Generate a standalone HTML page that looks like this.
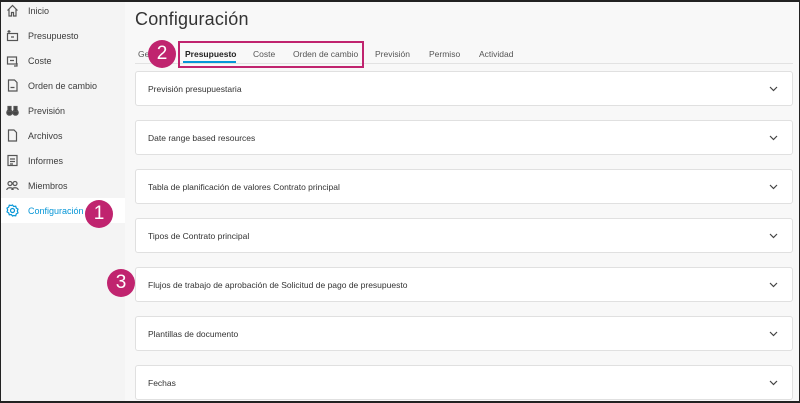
<!DOCTYPE html>
<html><head><meta charset="utf-8"><style>
*{box-sizing:border-box;margin:0;padding:0}
body{width:800px;height:403px;overflow:hidden;font-family:"Liberation Sans",sans-serif;background:#fff;position:relative}
.frame{position:absolute;left:0;top:0;width:800px;height:403px;border:1px solid #222;border-top-width:2px;border-bottom-width:2px;background:#f8f8f8;overflow:hidden}
.side{position:absolute;left:0;top:0;width:124px;height:403px;background:#f4f4f4}
.it{position:absolute;left:0;width:124px;height:25px;font-size:9px;color:#3c3c3c;display:flex;align-items:center}
.it svg{position:absolute;left:5px;width:13px;height:13px;fill:none;stroke:#555;stroke-width:1.2}
.it span{position:absolute;left:27px}
.it.act{background:#fff;color:#0696d7}
.it.act svg{stroke:#0696d7}
h1{position:absolute;left:134px;top:7px;font-size:18px;font-weight:normal;color:#333;letter-spacing:.2px}
.tabs{position:absolute;left:134px;top:40px;width:658px;height:22px;border-bottom:1px solid #e2e2e2;font-size:8.5px;color:#555}
.tabs span{position:absolute;top:7px}
.card{position:absolute;left:134px;width:658px;height:35px;background:#fff;border:1px solid #e0e0e0;border-radius:3px;font-size:8.5px;color:#333}
.card span{position:absolute;left:12px;top:12px}
.card svg{position:absolute;right:14px;top:13px;width:9px;height:7px}
.circ{position:absolute;width:28px;height:28px;border-radius:50%;background:#c0246f;color:#fff;font-size:19px;text-align:center;line-height:28px}
</style></head><body><div class="frame">
<div class="side">
<div class="it" style="top:-4px"><svg viewBox="0 0 13 13"><path d="M1.5 6.5L6.5 1.5 11.5 6.5M3 5v7h2.5V8.5h2V12H10V5"/></svg><span>Inicio</span></div>
<div class="it" style="top:21px"><svg viewBox="0 0 13 13"><rect x="1.5" y="4.5" width="10" height="7"/><path d="M3 1v3M1.5 2.5h3M5 8h3"/></svg><span>Presupuesto</span></div>
<div class="it" style="top:46px"><svg viewBox="0 0 13 13"><rect x="1.5" y="3" width="9" height="7"/><path d="M4 6.5h4M11 9v3h-3"/></svg><span>Coste</span></div>
<div class="it" style="top:71px"><svg viewBox="0 0 13 13"><path d="M2.5 1h6l2.5 2.5V12h-8.5z M4.5 8.5h4"/></svg><span>Orden de cambio</span></div>
<div class="it" style="top:96px"><svg viewBox="0 0 13 13" style="fill:#444"><circle cx="3.5" cy="8.5" r="2.7"/><circle cx="9.5" cy="8.5" r="2.7"/><rect x="2" y="2.5" width="3" height="5"/><rect x="8" y="2.5" width="3" height="5"/></svg><span>Previsión</span></div>
<div class="it" style="top:121px"><svg viewBox="0 0 13 13"><path d="M2.5 1h5.5l2.5 2.5V12h-8z"/></svg><span>Archivos</span></div>
<div class="it" style="top:146px"><svg viewBox="0 0 13 13"><rect x="2" y="1.5" width="9" height="10"/><path d="M4 5h5M4 7.5h5M4 10h3"/></svg><span>Informes</span></div>
<div class="it" style="top:171px"><svg viewBox="0 0 13 13"><circle cx="4" cy="4.5" r="2"/><circle cx="9" cy="4.5" r="2"/><path d="M0.8 11c0-3 6.4-3 6.4 0M5.8 11c0-3 6.4-3 6.4 0"/></svg><span>Miembros</span></div>
<div class="it act" style="top:196px"><svg viewBox="0 0 13 13"><circle cx="6.5" cy="6.5" r="2"/><path d="M6.5 1l1.2 1.5 2-.3.6 1.9 1.7 1-.7 1.9.7 1.9-1.7 1-.6 1.9-2-.3L6.5 12 5.3 10.5l-2 .3-.6-1.9L1 7.9l.7-1.9L1 4.1l1.7-1 .6-1.9 2 .3z"/></svg><span>Configuración</span></div>
</div>
<h1>Configuración</h1>
<div class="tabs">
<span style="left:3px">Ge</span>
<span style="left:50px;font-weight:bold;color:#222">Presupuesto</span>
<span style="left:118px">Coste</span>
<span style="left:158px">Orden de cambio</span>
<span style="left:240px">Previsión</span>
<span style="left:294px">Permiso</span>
<span style="left:344px">Actividad</span>
<div style="position:absolute;left:48px;top:19px;width:53px;height:2px;background:#0696d7"></div>
</div>
<div style="position:absolute;left:177px;top:39px;width:186px;height:27px;border:2px solid #c0246f"></div>
<div class="card" style="top:69px"><span>Previsión presupuestaria</span><svg viewBox="0 0 9 7"><path d="M1 2l3.5 3.5L8 2" stroke="#444" fill="none" stroke-width="1.2"/></svg></div>
<div class="card" style="top:118px"><span>Date range based resources</span><svg viewBox="0 0 9 7"><path d="M1 2l3.5 3.5L8 2" stroke="#444" fill="none" stroke-width="1.2"/></svg></div>
<div class="card" style="top:167px"><span>Tabla de planificación de valores Contrato principal</span><svg viewBox="0 0 9 7"><path d="M1 2l3.5 3.5L8 2" stroke="#444" fill="none" stroke-width="1.2"/></svg></div>
<div class="card" style="top:216px"><span>Tipos de Contrato principal</span><svg viewBox="0 0 9 7"><path d="M1 2l3.5 3.5L8 2" stroke="#444" fill="none" stroke-width="1.2"/></svg></div>
<div class="card" style="top:265px"><span>Flujos de trabajo de aprobación de Solicitud de pago de presupuesto</span><svg viewBox="0 0 9 7"><path d="M1 2l3.5 3.5L8 2" stroke="#444" fill="none" stroke-width="1.2"/></svg></div>
<div class="card" style="top:314px"><span>Plantillas de documento</span><svg viewBox="0 0 9 7"><path d="M1 2l3.5 3.5L8 2" stroke="#444" fill="none" stroke-width="1.2"/></svg></div>
<div class="card" style="top:363px"><span>Fechas</span><svg viewBox="0 0 9 7"><path d="M1 2l3.5 3.5L8 2" stroke="#444" fill="none" stroke-width="1.2"/></svg></div>
<div class="circ" style="left:147px;top:38px">2</div>
<div class="circ" style="left:84px;top:198px">1</div>
<div class="circ" style="left:106px;top:267px">3</div>
</div></body></html>
